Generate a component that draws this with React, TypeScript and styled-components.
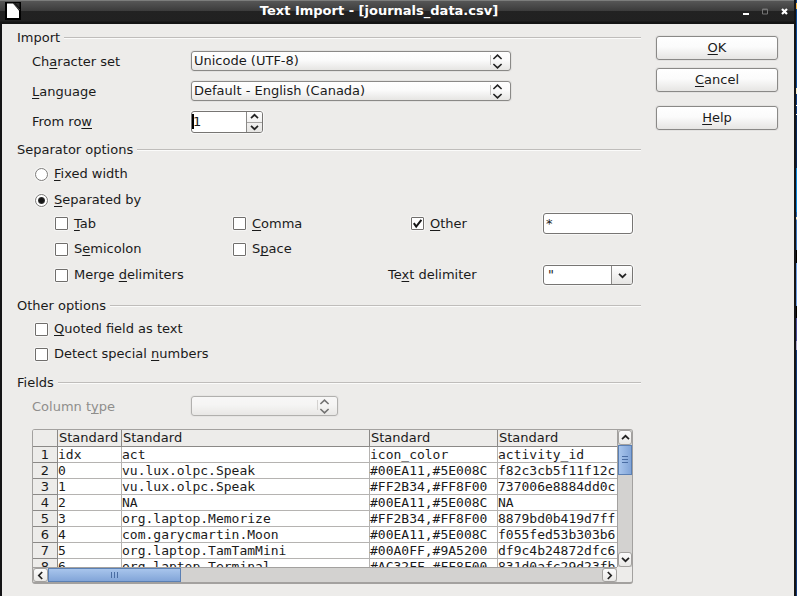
import React, { useState } from "react";
import styled, { createGlobalStyle, css } from "styled-components";

const Global = createGlobalStyle`
  *, *::before, *::after { box-sizing: border-box; }
  body { margin: 0; background: #111; }
  body, button, input, select {
    font-family: "DejaVu Sans", sans-serif;
    font-size: 13px;
    line-height: 16px;
    color: #1a1a1a;
  }
  u { text-underline-offset: 2px; text-decoration-thickness: 1px; text-decoration-skip-ink: none; }
`;

const raised = css`
  border: 1px solid #8a8987;
  border-radius: 3px;
  background: linear-gradient(#ffffff, #fbfbfb 45%, #e6e5e3);
  box-shadow: 0 0 0 1px #e3e2e0, 0 1px 1px #f8f8f7;
`;

const sunken = css`
  border: 1px solid #777573;
  border-radius: 3px;
  background: #fff;
  box-shadow: 0 0 0 1px #f7f7f6;
`;

/* ---------- window ---------- */

const Desktop = styled.div`
  display: flex;
  min-height: 100vh;
`;

const Window = styled.div`
  flex: 1;
  min-width: 0;
  display: flex;
  flex-direction: column;
  border-right: 2px solid #141416;
  background: #edecea;
`;

const Backdrop = styled.div`
  width: 1px;
  background: linear-gradient(
    #0b3f8a 0 3px, #f2b64a 3px 9px, #0b4a97 9px 88px, #f4ecd0 88px 94px, #0a3a80 94px 105px,
    #fff 105px 106px, #0a3a80 106px 114px, #fff 114px 115px, #06295c 115px 168px,
    #0c86dd 168px 212px, #1e63b0 212px 217px, #f4ecd0 217px 219px, #3b78c0 220px 250px,
    #000 250px 263px, #6b9be0 263px 306px, #000 306px 318px, #4a4f9a 318px 341px,
    #a9a4c8 341px 350px, #123a7a 350px 100%
  );
`;

const TitleBar = styled.header`
  display: flex;
  height: 24px;
  padding: 2px 0 0 5px;
  background: linear-gradient(
    #7c7d7c 0 1px, #565656 1px, #3b3b3b 11px, #222222 11px, #212121 21px, #141414 22px 24px
  );
`;

const Title = styled.h1`
  flex: 1;
  margin: 0;
  text-align: center;
  font-size: 13px;
  line-height: 18px;
  color: #fff;
`;

const WindowControls = styled.div`
  display: flex;
`;

const WindowButton = styled.button`
  display: grid;
  place-items: center;
  width: 19px;
  height: 18px;
  padding: 0;
  border: 0;
  background: none;
`;

const Body = styled.div`
  flex: 1;
  display: flex;
  gap: 15px;
  padding: 6px 16px 12px 15px;
  border-left: 2px solid #141416;
`;

const Options = styled.main`
  flex: 1;
  min-width: 0;
`;

const Actions = styled.aside`
  display: flex;
  flex-direction: column;
  gap: 8px;
  width: 122px;
  padding-top: 6px;
`;

const PushButton = styled.button<{ $apart?: boolean }>`
  ${raised}
  height: 24px;
  margin-top: ${(p) => (p.$apart ? 6 : 0)}px;
  padding: 0;
`;

/* ---------- groups and rows ---------- */

const Group = styled.section<{ $after?: number }>`
  margin-bottom: ${(p) => p.$after ?? 8}px;
`;

const Heading = styled.h2`
  display: flex;
  align-items: center;
  gap: 4px;
  margin: 0;
  font-size: 13px;
  font-weight: normal;
  line-height: 16px;

  &::after {
    content: "";
    flex: 1;
    height: 2px;
    background: linear-gradient(#bfbdbb 50%, #fbfbfa 50%);
  }
`;

const Rows = styled.div<{ $gap: number; $top: number }>`
  display: flex;
  flex-direction: column;
  gap: ${(p) => p.$gap}px;
  padding: ${(p) => p.$top}px 8px 0 15px;
`;

const FieldRow = styled.div<{ $disabled?: boolean }>`
  display: grid;
  grid-template-columns: 159px 1fr;
  align-items: center;
  height: 24px;
  color: ${(p) => (p.$disabled ? "#8f8e8c" : "inherit")};
`;

const CheckLabel = styled.label`
  display: flex;
  align-items: center;
  gap: 6px;
  height: 20px;
  white-space: nowrap;
`;

const Indent = styled.div<{ $by: number }>`
  display: flex;
  flex-direction: column;
  gap: 5px;
  padding-left: ${(p) => p.$by}px;
`;

const SeparatorGrid = styled.div`
  display: grid;
  grid-template-columns: 178px 178px 1fr 90px;
  gap: 5px 0;
  align-items: center;
`;

const DelimiterRow = styled.div`
  display: grid;
  grid-template-columns: 333px 1fr 90px;
  align-items: center;
  height: 22px;
`;

/* ---------- controls ---------- */

const Checkbox = styled.input.attrs({ type: "checkbox" })`
  appearance: none;
  width: 13px;
  height: 13px;
  margin: 0;
  border: 1px solid #706e6c;
  border-radius: 1px;
  box-shadow: 0 0 0 1px #f6f6f5;
  background: #fff;

  &:checked {
    background: #fff
      url("data:image/svg+xml,%3Csvg xmlns='http://www.w3.org/2000/svg' viewBox='0 0 11 11'%3E%3Cpath d='M1.8 5.2 4.2 8.6 9.4 1.8' fill='none' stroke='%23161616' stroke-width='2'/%3E%3C/svg%3E")
      center / 11px 11px no-repeat;
  }
`;

const Radio = styled.input.attrs({ type: "radio" })`
  appearance: none;
  width: 13px;
  height: 13px;
  margin: 0;
  border: 1px solid #7d7b79;
  border-radius: 50%;
  box-shadow: 0 0 0 1px #f6f6f5;
  background: #fff;

  &:checked {
    background: radial-gradient(circle, #161616 0 2px, #333 3px, #fff 4px);
  }
`;

const SelectBox = styled.div<{ $width: number; $disabled?: boolean }>`
  position: relative;
  width: ${(p) => p.$width}px;
  height: 20px;
  margin-bottom: 3px;
  opacity: ${(p) => (p.$disabled ? 0.6 : 1)};

  svg {
    position: absolute;
    top: 3px;
    right: 7px;
    pointer-events: none;
  }
`;

const Select = styled.select`
  ${raised}
  display: block;
  appearance: none;
  width: 100%;
  height: 100%;
  padding: 0 24px 0 2px;
  opacity: 1;
`;

const TextInput = styled.input`
  ${sunken}
  width: 100%;
  height: 21px;
  padding: 0 2px;
`;

const Joined = styled.div<{ $height: number; $width: string; $button: number }>`
  ${sunken}
  position: relative;
  display: grid;
  grid-template-columns: 1fr ${(p) => p.$button}px;
  width: ${(p) => p.$width};
  height: ${(p) => p.$height}px;
  overflow: hidden;
`;

const JoinedInput = styled.input<{ $pad: number }>`
  min-width: 0;
  width: 100%;
  padding: 0 0 0 ${(p) => p.$pad}px;
  border: 0;
  background: transparent;
`;

const Caret = styled.span`
  position: absolute;
  top: 2px;
  left: 0;
  width: 2px;
  height: 15px;
  background: #000;
`;

const JoinedButtons = styled.div`
  display: grid;
  border-left: 1px solid #8a8987;
  background: linear-gradient(#fff, #e6e5e3);
`;

const MiniButton = styled.button`
  display: grid;
  place-items: center;
  min-height: 0;
  padding: 0;
  border: 0;
  background: none;

  & + & {
    border-top: 1px solid #a5a3a1;
  }
`;

/* ---------- preview ---------- */

const PreviewFrame = styled.div`
  display: grid;
  grid-template-columns: 1fr 15px;
  grid-template-rows: 137px 15px;
  margin: 10px 8px 0 15px;
  border: 1px solid #a3a19f;
  border-bottom-width: 2px;
  border-radius: 3px;
  overflow: hidden;
`;

const Viewport = styled.div`
  overflow: hidden;
  background: #fff;
`;

const Preview = styled.table`
  width: 100%;
  table-layout: fixed;
  border-collapse: separate;
  border-spacing: 0;
`;

const Column = styled.col<{ $width?: number }>`
  width: ${(p) => (p.$width ? `${p.$width}px` : "auto")};
`;

const HeadCell = styled.th`
  height: 17px;
  padding: 0 0 0 1px;
  border-right: 1px solid #8b8987;
  border-bottom: 1px solid #8b8987;
  background: #edecea;
  font-weight: normal;
  line-height: 16px;
  text-align: left;
  white-space: nowrap;

  &:last-child {
    border-right: 0;
  }
`;

const RowNumber = styled.th`
  height: 16px;
  padding: 0;
  border-right: 1px solid #8b8987;
  border-bottom: 1px solid #8b8987;
  background: #edecea;
  font-weight: normal;
  line-height: 15px;
  text-align: center;
`;

const Cell = styled.td`
  height: 16px;
  padding: 0;
  border-right: 1px solid #b5b3b1;
  border-bottom: 1px solid #b5b3b1;
  font-family: "DejaVu Sans Mono", monospace;
  line-height: 15px;
  white-space: nowrap;

  &:last-child {
    border-right: 0;
  }
`;

const ScrollBar = styled.div<{ $vertical?: boolean }>`
  display: flex;
  flex-direction: ${(p) => (p.$vertical ? "column" : "row")};
  background: #d3d2d0;
  ${(p) => (p.$vertical ? "border-left" : "border-top")}: 1px solid #a3a19f;
`;

const ScrollButton = styled.button`
  display: grid;
  place-items: center;
  flex: 0 0 15px;
  padding: 0;
  border: 1px solid #a3a19f;
  border-radius: 3px;
  background: linear-gradient(#fcfcfc, #e9e8e6);
`;

const ScrollTrack = styled.div<{ $vertical?: boolean }>`
  flex: 1;
  display: flex;
  min-height: 0;
  flex-direction: ${(p) => (p.$vertical ? "column" : "row")};
`;

const Thumb = styled.div<{ $vertical?: boolean }>`
  display: grid;
  place-items: center;
  flex: 0 0 ${(p) => (p.$vertical ? "28%" : "24%")};
  border: 1px solid #5b80b4;
  background: linear-gradient(${(p) => (p.$vertical ? "90deg" : "180deg")}, #a8c5ec, #82a5d8);
`;

/* ---------- drawings ---------- */

function Chevron({ dir }: { dir: "up" | "down" | "left" | "right" }) {
  const d = {
    up: "M1 6.2 4.5 2.8 8 6.2",
    down: "M1 2.8 4.5 6.2 8 2.8",
    left: "M6.2 1 2.8 4.5 6.2 8",
    right: "M2.8 1 6.2 4.5 2.8 8",
  }[dir];
  return (
    <svg width="9" height="9" viewBox="0 0 9 9" aria-hidden="true">
      <path d={d} fill="none" stroke="#222" strokeWidth="1.7" />
    </svg>
  );
}

function SelectArrows() {
  return (
    <svg width="14" height="15" viewBox="0 0 14 15" aria-hidden="true">
      <path d="M.5 1v10" stroke="#c4c2c0" />
      <path d="M3.4 5 7.5 1.2 11.6 5M3.4 10 7.5 13.8 11.6 10" fill="none" stroke="#222" strokeWidth="1.6" />
    </svg>
  );
}

function DocumentIcon() {
  return (
    <svg width="16" height="18" viewBox="0 0 16 18" aria-hidden="true">
      <path d="M0 0h16v18H0z" fill="#000" />
      <path d="M2 1.5h6l6 7V16H2z" fill="#fff" />
      <path d="M10 1h4.5v5z" fill="#2c2c2c" />
      <path d="M8.5 1 15 8" stroke="#4a4a4a" />
    </svg>
  );
}

/* ---------- dialog ---------- */

function Pick(props: { id: string; width: number; value: string; disabled?: boolean }) {
  return (
    <SelectBox $width={props.width} $disabled={props.disabled}>
      <Select id={props.id} disabled={props.disabled}>
        <option>{props.value}</option>
      </Select>
      <SelectArrows />
    </SelectBox>
  );
}

function Check({ children, checked }: { children: React.ReactNode; checked?: boolean }) {
  return (
    <CheckLabel>
      <Checkbox defaultChecked={checked} />
      <span>{children}</span>
    </CheckLabel>
  );
}

const records = [
  ["idx", "act", "icon_color", "activity_id"],
  ["0", "vu.lux.olpc.Speak", "#00EA11,#5E008C", "f82c3cb5f11f12c"],
  ["1", "vu.lux.olpc.Speak", "#FF2B34,#FF8F00", "737006e8884dd0c"],
  ["2", "NA", "#00EA11,#5E008C", "NA"],
  ["3", "org.laptop.Memorize", "#FF2B34,#FF8F00", "8879bd0b419d7ff"],
  ["4", "com.garycmartin.Moon", "#00EA11,#5E008C", "f055fed53b303b6"],
  ["5", "org.laptop.TamTamMini", "#00A0FF,#9A5200", "df9c4b24872dfc6"],
  ["6", "org.laptop.Terminal", "#AC32FF,#FF8F00", "831d0afc29d23fb"],
];

export default function App() {
  const [row, setRow] = useState(1);

  return (
    <>
      <Global />
      <Desktop>
        <Window>
          <TitleBar>
            <DocumentIcon />
            <Title>Text Import - [journals_data.csv]</Title>
            <WindowControls>
              <WindowButton aria-label="Minimize">
                <svg width="7" height="7"><path d="M0 6h6" stroke="#fff" strokeWidth="2" /></svg>
              </WindowButton>
              <WindowButton aria-label="Maximize">
                <svg width="7" height="7"><path d="M.5 1h5v5h-5zM.5 1.5h5" fill="none" stroke="#757575" /></svg>
              </WindowButton>
              <WindowButton aria-label="Close">
                <svg width="7" height="7"><path d="M1 1l5 5M6 1 1 6" stroke="#fff" strokeWidth="2.2" /></svg>
              </WindowButton>
            </WindowControls>
          </TitleBar>

          <Body>
            <Options>
              <Group>
                <Heading>Import</Heading>
                <Rows $gap={6} $top={4}>
                  <FieldRow>
                    <label htmlFor="charset">Ch<u>a</u>racter set</label>
                    <Pick id="charset" width={320} value="Unicode (UTF-8)" />
                  </FieldRow>
                  <FieldRow>
                    <label htmlFor="language"><u>L</u>anguage</label>
                    <Pick id="language" width={320} value="Default - English (Canada)" />
                  </FieldRow>
                  <FieldRow>
                    <label htmlFor="from-row">From ro<u>w</u></label>
                    <Joined $height={22} $width="72px" $button={16}>
                      <JoinedInput
                        id="from-row"
                        $pad={1}
                        inputMode="numeric"
                        value={row}
                        onChange={(e) => setRow(Number(e.target.value) || 1)}
                      />
                      <Caret />
                      <JoinedButtons>
                        <MiniButton aria-label="Increase" onClick={() => setRow(row + 1)}>
                          <Chevron dir="up" />
                        </MiniButton>
                        <MiniButton aria-label="Decrease" onClick={() => setRow(Math.max(1, row - 1))}>
                          <Chevron dir="down" />
                        </MiniButton>
                      </JoinedButtons>
                    </Joined>
                  </FieldRow>
                </Rows>
              </Group>

              <Group $after={12}>
                <Heading>Separator options</Heading>
                <Rows $gap={6} $top={6}>
                  <Indent $by={3}>
                    <CheckLabel>
                      <Radio name="mode" />
                      <span><u>F</u>ixed width</span>
                    </CheckLabel>
                  </Indent>
                  <Indent $by={3}>
                    <CheckLabel>
                      <Radio name="mode" defaultChecked />
                      <span><u>S</u>eparated by</span>
                    </CheckLabel>
                  </Indent>
                </Rows>
                <Rows $gap={5} $top={3}>
                  <Indent $by={23}>
                    <SeparatorGrid>
                      <Check><u>T</u>ab</Check>
                      <Check><u>C</u>omma</Check>
                      <Check checked><u>O</u>ther</Check>
                      <TextInput aria-label="Other separator" defaultValue="*" />
                      <Check>S<u>e</u>micolon</Check>
                      <Check>S<u>p</u>ace</Check>
                    </SeparatorGrid>
                    <DelimiterRow>
                      <Check>Merge <u>d</u>elimiters</Check>
                      <label htmlFor="delimiter">Te<u>x</u>t delimiter</label>
                      <Joined $height={20} $width="100%" $button={21}>
                        <JoinedInput id="delimiter" $pad={4} defaultValue={'"'} />
                        <JoinedButtons>
                          <MiniButton aria-label="Show delimiters"><Chevron dir="down" /></MiniButton>
                        </JoinedButtons>
                      </Joined>
                    </DelimiterRow>
                  </Indent>
                </Rows>
              </Group>

              <Group $after={11}>
                <Heading>Other options</Heading>
                <Rows $gap={6} $top={5}>
                  <Indent $by={3}>
                    <Check><u>Q</u>uoted field as text</Check>
                    <Check>Detect special <u>n</u>umbers</Check>
                  </Indent>
                </Rows>
              </Group>

              <section>
                <Heading>Fields</Heading>
                <Rows $gap={6} $top={4}>
                  <FieldRow $disabled>
                    <label htmlFor="column-type">Column t<u>y</u>pe</label>
                    <Pick id="column-type" width={147} value="" disabled />
                  </FieldRow>
                </Rows>
                <PreviewFrame>
                  <Viewport>
                    <Preview>
                      <colgroup>
                        <Column $width={25} />
                        <Column $width={64} />
                        <Column $width={248} />
                        <Column $width={128} />
                        <Column />
                      </colgroup>
                      <thead>
                        <tr>
                          <HeadCell />
                          {records[0].map((name) => (
                            <HeadCell key={name} scope="col">Standard</HeadCell>
                          ))}
                        </tr>
                      </thead>
                      <tbody>
                        {records.map((record, i) => (
                          <tr key={record[0]}>
                            <RowNumber scope="row">{i + 1}</RowNumber>
                            {record.map((text, c) => (
                              <Cell key={c}>{text}</Cell>
                            ))}
                          </tr>
                        ))}
                      </tbody>
                    </Preview>
                  </Viewport>
                  <ScrollBar $vertical>
                    <ScrollButton aria-label="Scroll up"><Chevron dir="up" /></ScrollButton>
                    <ScrollTrack $vertical>
                      <Thumb $vertical>
                        <svg width="6" height="7"><path d="M0 .5h6M0 3.5h6M0 6.5h6" stroke="#4a6da3" /></svg>
                      </Thumb>
                    </ScrollTrack>
                    <ScrollButton aria-label="Scroll down"><Chevron dir="down" /></ScrollButton>
                  </ScrollBar>
                  <ScrollBar>
                    <ScrollButton aria-label="Scroll left"><Chevron dir="left" /></ScrollButton>
                    <ScrollTrack>
                      <Thumb>
                        <svg width="7" height="6"><path d="M.5 0v6M3.5 0v6M6.5 0v6" stroke="#4a6da3" /></svg>
                      </Thumb>
                    </ScrollTrack>
                    <ScrollButton aria-label="Scroll right"><Chevron dir="right" /></ScrollButton>
                  </ScrollBar>
                </PreviewFrame>
              </section>
            </Options>

            <Actions>
              <PushButton><u>O</u>K</PushButton>
              <PushButton><u>C</u>ancel</PushButton>
              <PushButton $apart><u>H</u>elp</PushButton>
            </Actions>
          </Body>
        </Window>
        <Backdrop />
      </Desktop>
    </>
  );
}
